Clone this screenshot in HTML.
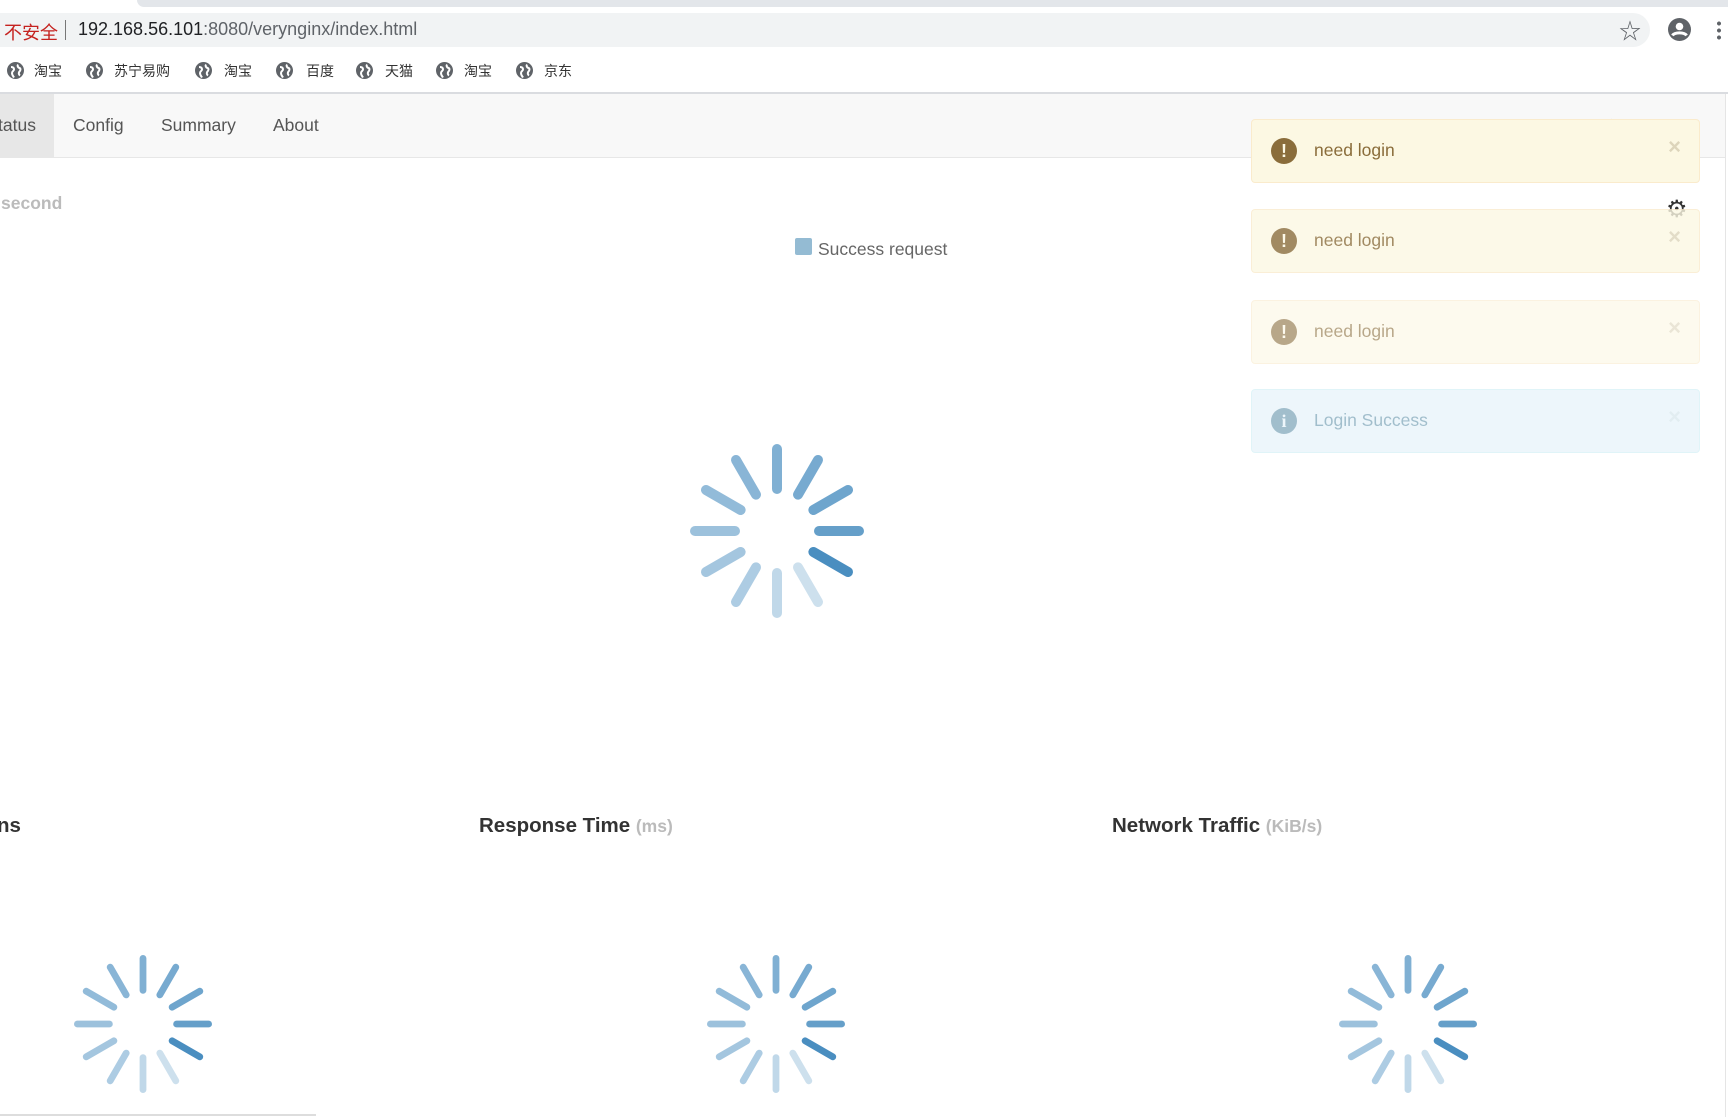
<!DOCTYPE html>
<html><head><meta charset="utf-8"><style>
*{margin:0;padding:0;box-sizing:border-box}
body{width:1728px;height:1117px;overflow:hidden;background:#fff;font-family:"Liberation Sans","Noto Sans CJK SC",sans-serif;position:relative}
.a{position:absolute;white-space:nowrap}
.bm{font-size:14px;color:#333;top:61px}
.glb{position:absolute;top:62px;width:17px;height:17px}
.nav{font-size:17.5px;color:#555;top:115px}
.nt{position:absolute;left:1251px;width:449px;height:64px;border:1px solid #faebcc;background:#fcf8e3;border-radius:4px}
.nt .ic{position:absolute;left:19px;top:18px;width:26px;height:26px;border-radius:50%;background:#8a6d3b;color:#fcf8e3;font-weight:bold;font-size:18px;text-align:center;line-height:26px}
.nt .tx{position:absolute;left:62px;top:20px;font-size:17.5px;color:#8a6d3b}
.nt .x{position:absolute;right:18px;top:14px;font-size:22px;font-weight:bold;color:#ddd5bb}
h3{position:absolute;top:814px;font-size:20.5px;font-weight:bold;color:#333;white-space:nowrap}
h3 small{font-size:17.5px;color:#bbb;font-weight:bold}
</style></head><body>
<svg width="0" height="0" style="position:absolute"><defs>
<g id="sp" stroke="#4a8ec0" stroke-linecap="round" fill="none">
<line x1="0" y1="-42" x2="0" y2="-82" transform="rotate(120)" opacity="1"/>
<line x1="0" y1="-42" x2="0" y2="-82" transform="rotate(90)" opacity=".85"/>
<line x1="0" y1="-42" x2="0" y2="-82" transform="rotate(60)" opacity=".8"/>
<line x1="0" y1="-42" x2="0" y2="-82" transform="rotate(30)" opacity=".75"/>
<line x1="0" y1="-42" x2="0" y2="-82" transform="rotate(0)" opacity=".7"/>
<line x1="0" y1="-42" x2="0" y2="-82" transform="rotate(330)" opacity=".65"/>
<line x1="0" y1="-42" x2="0" y2="-82" transform="rotate(300)" opacity=".6"/>
<line x1="0" y1="-42" x2="0" y2="-82" transform="rotate(270)" opacity=".55"/>
<line x1="0" y1="-42" x2="0" y2="-82" transform="rotate(240)" opacity=".5"/>
<line x1="0" y1="-42" x2="0" y2="-82" transform="rotate(210)" opacity=".45"/>
<line x1="0" y1="-42" x2="0" y2="-82" transform="rotate(180)" opacity=".35"/>
<line x1="0" y1="-42" x2="0" y2="-82" transform="rotate(150)" opacity=".28"/>
</g>
<g id="gl"><circle cx="8.5" cy="8.5" r="8.5" fill="#5f6368"/><path d="M4 5c2 0 3 1 3 2.5S5 9 5 11s1 3 2 4.5M11 2.5c-1 1.5 0 3 1.5 3.5s1 2.5 0 3.5-1 3 .5 4" stroke="#fff" stroke-width="2" fill="none"/></g>
</defs></svg>

<div class="a" style="left:137px;top:0;width:1591px;height:7px;background:#e3e6ea;border-radius:0 0 0 8px"></div>
<div class="a" style="left:0;top:13px;width:1650px;height:34px;background:#f1f3f4;border-radius:0 17px 17px 0"></div>
<div class="a" style="left:4px;top:19px;font-size:18px;color:#c5221f">不安全</div>
<div class="a" style="left:65px;top:20px;width:1px;height:20px;background:#777"></div>
<div class="a" style="left:78px;top:19px;font-size:18px;color:#202124">192.168.56.101<span style="color:#5f6368">:8080/verynginx/index.html</span></div>
<div class="a" style="left:1619px;top:14px;font-size:22px;color:#5f6368">☆</div>
<svg class="a" style="left:1668px;top:18px" width="23" height="23"><circle cx="11.5" cy="11.5" r="11.5" fill="#5f6368"/><circle cx="11.5" cy="8.5" r="3.8" fill="#fff"/><path d="M4.5 17.5c2-3.5 12-3.5 14 0" stroke="#fff" stroke-width="3" fill="none"/></svg>
<div class="a" style="left:1717px;top:20px;width:4px;height:20px;background:radial-gradient(circle,#5f6368 1.8px,transparent 2.2px) 0 0/4px 7px"></div>

<svg class="glb" style="left:7px"><use href="#gl"/></svg><div class="a bm" style="left:34px">淘宝</div>
<svg class="glb" style="left:86px"><use href="#gl"/></svg><div class="a bm" style="left:114px">苏宁易购</div>
<svg class="glb" style="left:195px"><use href="#gl"/></svg><div class="a bm" style="left:224px">淘宝</div>
<svg class="glb" style="left:276px"><use href="#gl"/></svg><div class="a bm" style="left:306px">百度</div>
<svg class="glb" style="left:356px"><use href="#gl"/></svg><div class="a bm" style="left:385px">天猫</div>
<svg class="glb" style="left:436px"><use href="#gl"/></svg><div class="a bm" style="left:464px">淘宝</div>
<svg class="glb" style="left:516px"><use href="#gl"/></svg><div class="a bm" style="left:544px">京东</div>

<div class="a" style="left:0;top:92px;width:1728px;height:2px;background:#dadce0"></div>
<div class="a" style="left:0;top:94px;width:1726px;height:64px;background:#f8f8f8;border-bottom:1px solid #e7e7e7"></div>
<div class="a" style="left:0;top:94px;width:54px;height:63px;background:#e7e7e7"></div>
<div class="a nav" style="left:-2px">tatus</div>
<div class="a nav" style="left:73px">Config</div>
<div class="a nav" style="left:161px">Summary</div>
<div class="a nav" style="left:273px">About</div>
<div class="a nav" style="left:1585px;color:#777">中文 &nbsp; Logout</div>
<div class="a" style="left:1725px;top:94px;width:1px;height:1023px;background:#e5e5e5"></div>

<div class="a" style="left:1px;top:193px;font-size:17.5px;font-weight:bold;color:#bbb">second</div>
<div class="a" style="left:795px;top:238px;width:17px;height:17px;background:#94bbd3;border-radius:2px"></div>
<div class="a" style="left:818px;top:239px;font-size:17.5px;color:#666">Success request</div>

<svg class="a" style="left:677px;top:431px" width="200" height="200"><use href="#sp" transform="translate(100,100)" stroke-width="10"/></svg>

<h3 style="left:-3px">ns</h3>
<h3 style="left:479px">Response Time <small>(ms)</small></h3>
<h3 style="left:1112px">Network Traffic <small>(KiB/s)</small></h3>

<svg class="a" style="left:63px;top:944px" width="160" height="160"><use href="#sp" transform="translate(80,80) scale(.8)" stroke-width="8.5"/></svg>
<svg class="a" style="left:696px;top:944px" width="160" height="160"><use href="#sp" transform="translate(80,80) scale(.8)" stroke-width="8.5"/></svg>
<svg class="a" style="left:1328px;top:944px" width="160" height="160"><use href="#sp" transform="translate(80,80) scale(.8)" stroke-width="8.5"/></svg>
<div class="a" style="left:0;top:1114px;width:316px;height:2px;background:#ddd"></div>

<div class="nt" style="top:119px"><div class="ic">!</div><div class="tx">need login</div><div class="x">×</div></div>
<div class="a" style="left:1666px;top:195px;font-size:24px;color:#333">⚙</div>
<div class="nt" style="top:209px;opacity:.8"><div class="ic">!</div><div class="tx">need login</div><div class="x">×</div></div>
<div class="nt" style="top:300px;opacity:.6"><div class="ic">!</div><div class="tx">need login</div><div class="x">×</div></div>
<div class="nt" style="top:389px;opacity:.45;background:#d9edf7;border-color:#bce8f1"><div class="ic" style="background:#31708f;color:#d9edf7;font-family:'Liberation Serif',serif">i</div><div class="tx" style="color:#31708f">Login Success</div><div class="x" style="color:#c0d8e2">×</div></div>
</body></html>
